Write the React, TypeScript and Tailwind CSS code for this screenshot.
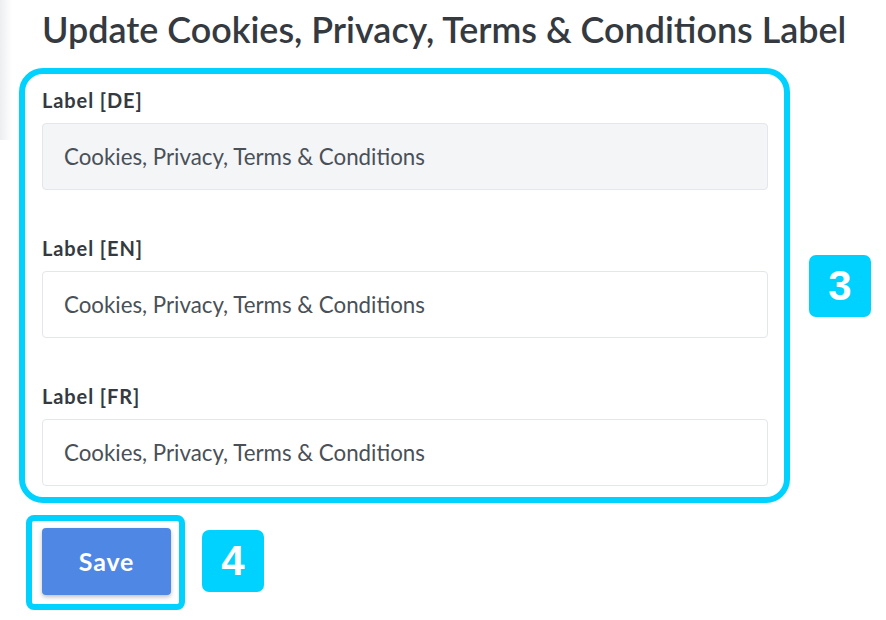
import React from 'react';

const FIELDS = [
	{ code: 'DE', disabled: true },
	{ code: 'EN', disabled: false },
	{ code: 'FR', disabled: false },
];

const VALUE = 'Cookies, Privacy, Terms & Conditions';

function Badge({ n }: { n: number }) {
	return (
		<div className="w-[62px] h-[62px] rounded-[7px] bg-[#00d2ff] flex items-center justify-center text-white font-bold text-[42px] leading-none font-['Liberation_Sans',sans-serif]">
			{n}
		</div>
	);
}

export default function App() {
	return (
		<div className="w-[886px] h-[620px] bg-white font-['Lato',sans-serif] pl-[19px] pt-[9px] relative overflow-hidden">
			<div className="absolute left-0 top-0 h-[140px] w-[12px] bg-gradient-to-r from-[#eceef0] to-white" />
			<h1 className="ml-[23px] text-[35.9px] leading-[42px] font-semibold text-[#343a40]">
				Update Cookies, Privacy, Terms &amp; Conditions Label
			</h1>

			<div className="flex items-center mt-[17px]">
				<div className="w-[771px] border-[6px] border-[#00d2ff] rounded-[24px] pl-[17px] pr-[16px] pt-[15px] pb-[11px]">
					{FIELDS.map((f, i) => (
						<div key={f.code} className={i > 0 ? 'mt-[47px]' : ''}>
							<label className="block text-[20px] leading-[22px] font-bold text-[#343a40] tracking-[0.9px]">
								Label [{f.code}]
							</label>
							<div
								className={`mt-[12px] h-[67px] rounded-[4px] border border-[#e3e6ea] flex items-center px-[21px] text-[22.3px] text-[#495057] ${
									f.disabled ? 'bg-[#f4f5f7]' : 'bg-white'
								}`}
							>
								{VALUE}
							</div>
						</div>
					))}
				</div>
				<div className="ml-[19px]">
					<Badge n={3} />
				</div>
			</div>

			<div className="flex items-start mt-[12px] ml-[7px]">
				<div className="border-[6px] border-[#00d2ff] rounded-[8px] pl-[10px] pr-[8px] pt-[7px] pb-[9px]">
					<button className="w-[129px] h-[67px] rounded-[4px] bg-[#4f88e4] text-white font-bold text-[25px] tracking-[0.8px] shadow-[0_2px_4px_rgba(0,0,0,0.25)]">
						Save
					</button>
				</div>
				<div className="ml-[17px] mt-[15px]">
					<Badge n={4} />
				</div>
			</div>
		</div>
	);
}
